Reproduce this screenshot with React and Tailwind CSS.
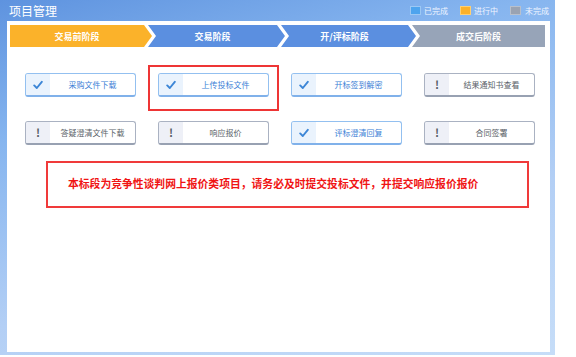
import React from 'react';

const stages = [
  { name: '交易前阶段', bg: 'bg-[#fbb22a]', shape: 'first' },
  { name: '交易阶段', bg: 'bg-[#5b8fe0]', shape: 'mid' },
  { name: '开/评标阶段', bg: 'bg-[#5b8fe0]', shape: 'mid' },
  { name: '成交后阶段', bg: 'bg-[#97a4b8]', shape: 'last' },
];

const shapeClass = {
  first:
    'pr-[8px] [clip-path:polygon(0_0,calc(100%_-_8px)_0,100%_50%,calc(100%_-_8px)_100%,0_100%)]',
  mid:
    'pr-[8px] [clip-path:polygon(0_0,calc(100%_-_8px)_0,100%_50%,calc(100%_-_8px)_100%,0_100%,8px_50%)]',
  last: '[clip-path:polygon(0_0,100%_0,100%_100%,0_100%,8px_50%)]',
};

const stageWidth = ['w-[142px]', 'w-[137px] -ml-[4px]', 'w-[135px] -ml-[4px]', 'w-[133px] -ml-[4px]'];

const tasks = [
  { label: '采购文件下载', done: true },
  { label: '上传投标文件', done: true, current: true },
  { label: '开标签到解密', done: true },
  { label: '结果通知书查看', done: false },
  { label: '答疑澄清文件下载', done: false },
  { label: '响应报价', done: false },
  { label: '评标澄清回复', done: true },
  { label: '合同签署', done: false },
];

const Check = () => (
  <svg width="10" height="10" viewBox="0 0 10 10">
    <path d="M1.2 5.4 L3.8 8 L8.8 1.8" fill="none" stroke="#3d86d6" strokeWidth="1.9" strokeLinecap="round" strokeLinejoin="round" />
  </svg>
);

const TaskButton = ({ label, done }) => (
  <div
    className={
      'flex h-[24px] w-[111px] overflow-hidden rounded-[3px] border bg-white ' +
      (done ? 'border-[#93c0f0] border-b-2 border-b-[#80b1ea]' : 'border-[#aab2c2] border-b-2 border-b-[#98a1b2]')
    }
  >
    <div
      className={
        'flex w-[24px] shrink-0 items-center justify-center ' + (done ? 'bg-[#eaf3fd]' : 'bg-[#eef0f7]')
      }
    >
      {done ? <Check /> : <span className="text-[11px] font-bold leading-none text-[#555b66]">!</span>}
    </div>
    <div
      className={
        'flex flex-1 items-center justify-center text-[8px] leading-none ' +
        (done ? 'text-[#3b80d6]' : 'text-[#5a5f68]')
      }
    >
      {label}
    </div>
  </div>
);

const App = () => {
  return (
    <div className="h-[357px] w-[576px] bg-white font-['Noto_Sans_CJK_SC',sans-serif]">
      <div className="flex h-[355px] w-[555px] flex-col bg-[linear-gradient(165deg,#5e93df_0%,#86b5ef_28%,#b3cff5_65%,#c6ddf8_100%)] pb-[3px] pl-[7px] pr-[5px]">
        <div className="flex h-[21px] items-center justify-between">
          <span className="pl-[2px] text-[12px] leading-none text-white">项目管理</span>
          <div className="flex items-center pr-[1px] text-[8px] leading-none text-[#eef4ff]">
            <span className="h-[9px] w-[11px] border border-[#9cc8f4] bg-[#4ea4ee]"></span>
            <span className="ml-[3px]">已完成</span>
            <span className="ml-[12px] h-[9px] w-[11px] border border-[#ffd070] bg-[#fbb12a]"></span>
            <span className="ml-[3px]">进行中</span>
            <span className="ml-[12px] h-[9px] w-[11px] border border-[#b8c0cc] bg-[#9aa3b2]"></span>
            <span className="ml-[4px]">未完成</span>
          </div>
        </div>

        <div className="flex-1 bg-white">
          <div className="ml-[3px] mt-[4px] flex h-[22px]">
            {stages.map((s, i) => (
              <div
                key={s.name}
                className={
                  'flex h-full items-center justify-center text-[9px] font-bold leading-none text-white ' +
                  s.bg + ' ' + shapeClass[s.shape] + ' ' + stageWidth[i]
                }
              >
                {s.name}
              </div>
            ))}
          </div>

          <div className="ml-[18px] mt-[26px] grid grid-cols-[repeat(4,111px)] gap-x-[22px] gap-y-[24px]">
            {tasks.map((t) => (
              <div key={t.label} className="relative">
                <TaskButton label={t.label} done={t.done} />
                {t.current && (
                  <span className="pointer-events-none absolute -bottom-[14px] -left-[10px] -right-[10px] -top-[8px] border-2 border-[#ee3535]"></span>
                )}
              </div>
            ))}
          </div>

          <div className="ml-[39px] mt-[16px] flex h-[47px] w-[483px] items-center border-2 border-[#f03a3a] pb-[3px] pl-[20px]">
            <span className="text-[10.8px] font-bold leading-none text-[#f01414]">
              本标段为竞争性谈判网上报价类项目，请务必及时提交投标文件，并提交响应报价报价
            </span>
          </div>
        </div>
      </div>
    </div>
  );
};

export default App;
